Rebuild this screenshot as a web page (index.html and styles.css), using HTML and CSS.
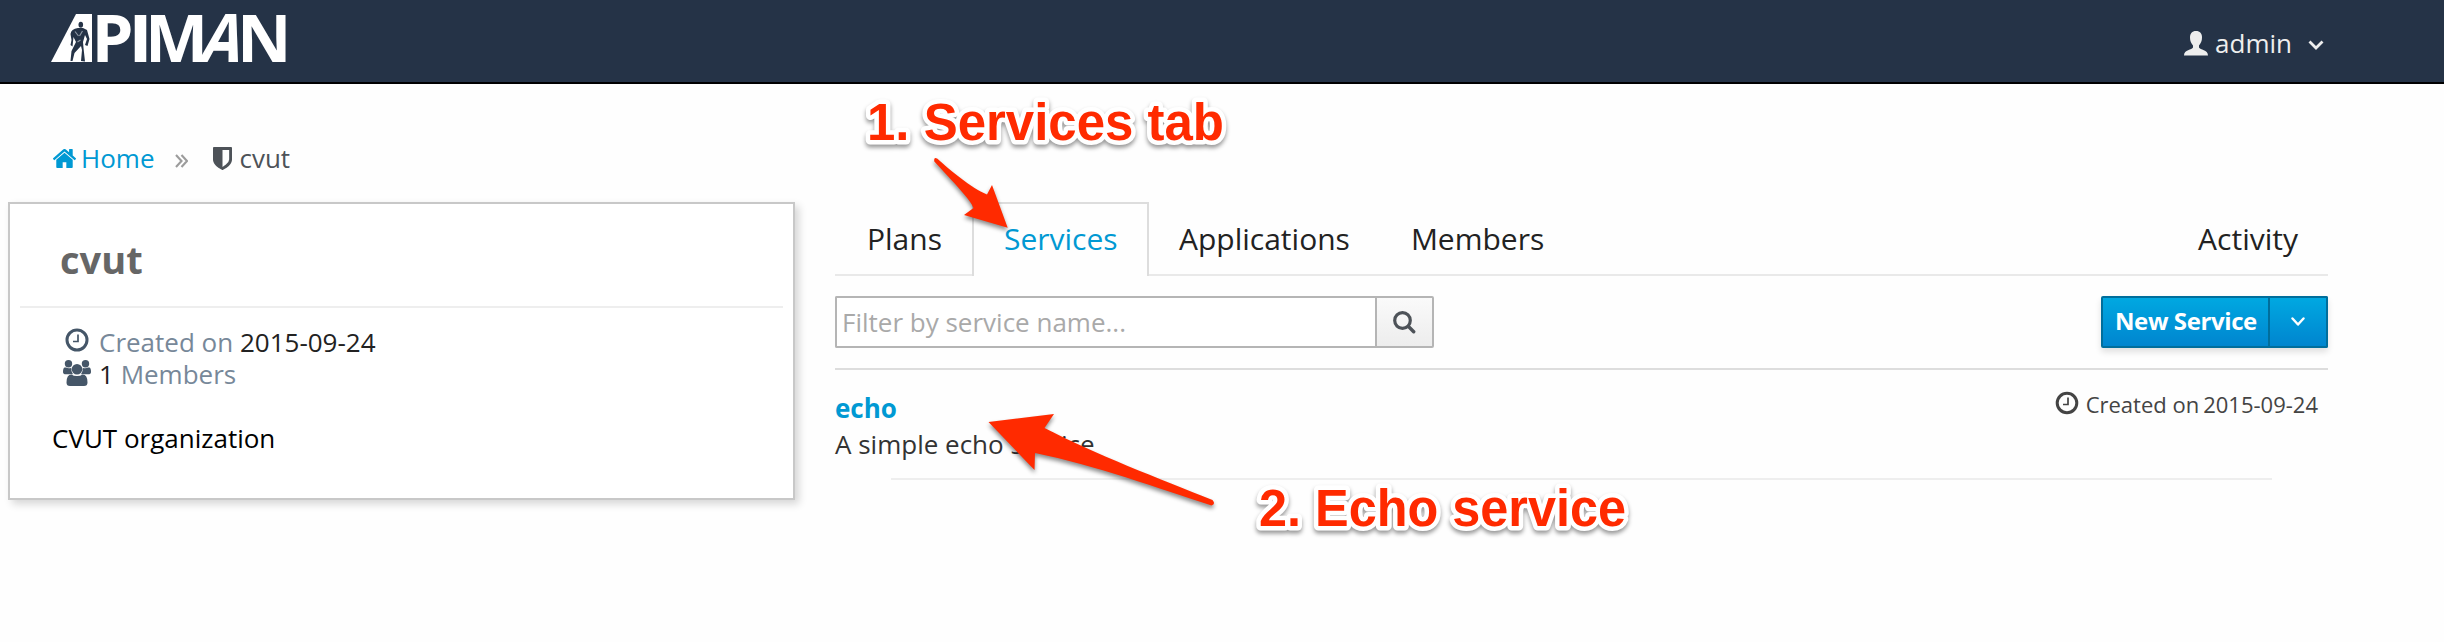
FILE: index.html
```html
<!DOCTYPE html>
<html lang="en">
<head>
<meta charset="utf-8">
<title>apiman - cvut</title>
<link rel="stylesheet" href="styles.css">
</head>
<body>
<header class="navbar">
  <svg class="logo" width="240" height="82" viewBox="0 0 240 82" role="img" aria-label="APIMAN">
    <path class="logo-mark" d="M0 62 25 14H41V62Z"/>
    <g class="logo-man">
      <ellipse cx="29.8" cy="24.8" rx="2.3" ry="3"/>
      <path d="M27 28Q20 29 19.5 34L20.5 40 19.5 45 21.500 46.500 22.500 37 25 42 20.5 51 19.5 61H21.500L23.500 53 30 46 31 50 30 61 34 61.500 32.500 48 32 42 34 35 36 39 34 45 36.500 46 38.500 39 36 30 32 28Z"/>
      <path class="logo-man-light" d="M24 31.500 27.500 36M31.500 31 28.500 36M26.500 42 29.500 40"/>
    </g>
    <g class="logo-word">
      <text x="40.500" y="62">P</text>
      <text x="77" y="62" textLength="25" lengthAdjust="spacingAndGlyphs">I</text>
      <text x="94" y="62">M</text>
      <text transform="translate(147 62) skewX(-15)" textLength="40" lengthAdjust="spacingAndGlyphs">A</text>
      <text x="186" y="62">N</text>
    </g>
  </svg>
  <div class="user-menu">
    <svg width="24" height="25" viewBox="0 0 24 25"><path fill="currentColor" d="M12 0C16 0 18 2.500 18 6.500 18 10 16.800 12 15 14.500V16.500C16 19 24 18.500 24 24.500H0C0 18.500 8 19 9 16.500V14.500C7.200 12 6 10 6 6.500 6 2.500 8 0 12 0Z"/></svg>
    <span class="user-name">admin</span>
    <svg width="16" height="11" viewBox="0 0 16 11"><path class="stroke" stroke-width="2.800" d="M1.500 1.500 8 8 14.500 1.500"/></svg>
  </div>
</header>

<nav class="breadcrumb">
  <a class="crumb-home" href="#"><svg width="23" height="19" viewBox="26 256 1612 1280" preserveAspectRatio="none"><path fill="currentColor" d="M1408 992v480q0 26-19 45t-45 19h-384v-384h-256v384h-384q-26 0-45-19t-19-45v-480q0-1 .5-3t.5-3l575-474 575 474q1 2 1 6zm223-69l-62 74q-8 9-21 11h-3q-13 0-21-7l-692-577-692 577q-12 8-24 7-13-2-21-11l-62-74q-8-10-7-23.500t11-21.500l719-599q32-26 76-26t76 26l244 204v-195q0-14 9-23t23-9h192q14 0 23 9t9 23v408l219 182q10 8 11 21.500t-7 23.500z"/></svg><span>Home</span></a>
  <svg class="crumb-sep" width="13" height="14" viewBox="0 0 13 14"><path class="stroke" stroke-width="2.100" d="M1 1 6.500 7 1 13M6.500 1 12 7 6.500 13"/></svg>
  <span class="crumb-org"><svg width="19" height="23" viewBox="256 128 1280 1536" preserveAspectRatio="none"><path fill="currentColor" d="M1344 960v-640h-448v1137q119-63 213-137 235-184 235-360zm192-768v768q0 86-33.500 170.500t-83 150-118 127.500-126.500 103-121 77.500-89.500 49.500-42.500 20q-12 6-26 6t-26-6q-16-7-42.500-20t-89.500-49.500-121-77.500-126.500-103-118-127.500-83-150-33.500-170.500v-768q0-26 19-45t45-19h1152q26 0 45 19t19 45z"/></svg><span>cvut</span></span>
</nav>

<main class="page">
  <section class="org-card">
    <h1 class="org-title">cvut</h1>
    <div class="org-meta">
      <div class="meta-row">
        <svg class="meta-icon" width="28" height="28" viewBox="0 0 28 28"><circle class="stroke" stroke-width="3" cx="14" cy="14" r="10"/><path class="stroke" stroke-width="1.700" d="M15 8.500V15.500H10"/></svg>
        <span><span class="muted">Created on</span> 2015-09-24</span>
      </div>
      <div class="meta-row">
        <svg class="meta-icon members" width="28" height="26" viewBox="0 0 28 26"><g fill="currentColor"><circle cx="5.500" cy="3.700" r="3.700"/><circle cx="22.500" cy="3.700" r="3.700"/><path d="M3 7.500Q5.500 9 8.300 7.800 7.800 11 10 14.300H3Q0 14.300 0 12 0 8 1.500 7.500ZM25 7.500Q22.500 9 19.700 7.800 20.200 11 18 14.300H25Q28 14.300 28 12 28 8 26.500 7.500Z"/><circle cx="14" cy="9.300" r="5.300"/><path d="M8.500 14.500Q10.500 16 14 16T19.500 14.500Q24.500 14.500 24.500 22.500 24.500 26 21 26H7Q3.500 26 3.500 22.500 3.500 14.500 8.500 14.500Z"/></g></svg>
        <span>1 <span class="muted">Members</span></span>
      </div>
    </div>
    <p class="org-desc">CVUT organization</p>
  </section>

  <section class="content">
    <ul class="tabs">
      <li class="tab">Plans</li>
      <li class="tab active">Services</li>
      <li class="tab">Applications</li>
      <li class="tab">Members</li>
      <li class="tab last">Activity</li>
    </ul>
    <div class="toolbar">
      <div class="filter">
        <input class="filter-input" type="text" placeholder="Filter by service name...">
        <button class="filter-btn" aria-label="Search"><svg width="23" height="23" viewBox="0 0 23 23"><circle class="stroke" stroke-width="3.200" cx="9.500" cy="9.500" r="7.800"/><path class="stroke" stroke-width="3.400" stroke-linecap="round" d="M15.500 15.500 20.700 20.700"/></svg></button>
      </div>
      <div class="split-btn">
        <button class="btn-main"><span>New Service</span></button>
        <button class="btn-toggle" aria-label="More"><svg width="14" height="10" viewBox="0 0 14 10"><path class="stroke" stroke-width="2.400" stroke-linecap="round" stroke-linejoin="round" d="M1.500 1.500 7 7.500 12.500 1.500"/></svg></button>
      </div>
    </div>
    <article class="service">
      <div>
        <a class="service-name" href="#">echo</a>
        <p class="service-desc">A simple echo service</p>
      </div>
      <div class="service-date">
        <svg width="24" height="24" viewBox="0 0 24 24"><circle class="stroke" stroke-width="3" cx="12" cy="12" r="9.800"/><path class="stroke" stroke-width="1.700" d="M13 6.500V13.500H8"/></svg>
        <span class="date-label">Created on</span><span>2015-09-24</span>
      </div>
    </article>
  </section>
</main>

<svg class="annotations" width="2444" height="642" viewBox="0 0 2444 642">
  <g class="arrows">
    <path d="M937.500 158.800C950 170 971 188 987 194.500L992 185 1007.700 227.700 964 215 973.500 208C971 200 953 182 934.300 161.500Q933.500 156.500 937.500 158.800Z"/>
    <path d="M988.500 422 1054 414 1044.500 428C1095 454 1160 479 1212.500 500Q1216 504 1211.500 505.500C1160 489 1095 465 1035 453L1034.500 470Z"/>
  </g>
  <g class="notes">
    <text x="867" y="140" textLength="357" lengthAdjust="spacingAndGlyphs">1. Services tab</text>
    <text x="1259" y="526" textLength="367" lengthAdjust="spacingAndGlyphs">2. Echo service</text>
  </g>
</svg>
</body>
</html>
```
FILE: styles.css
```css
* { box-sizing: border-box; }

body {
  margin: 0;
  width: 2444px;
  height: 642px;
  overflow: hidden;
  background: #fefefe;
  color: #333;
  font: 26px/32px "Open Sans", "Noto Sans", sans-serif;
}

a { color: #0099d3; text-decoration: none; }
svg { display: block; flex: none; }
button, input { font: inherit; margin: 0; }
.stroke { fill: none; stroke: currentColor; }

.navbar {
  display: flex;
  justify-content: space-between;
  height: 84px;
  padding: 0 120px 0 51px;
  background: #253347;
  border-bottom: 2px solid #000;
}
.logo { overflow: visible; }
.logo-mark { fill: #fff; }
.logo-man { fill: #253347; }
.logo-man-light { fill: none; stroke: #8f98a4; stroke-width: 1.2; }
.logo-word { fill: #fff; font-size: 67px; font-weight: 700; }
.user-menu {
  display: flex;
  align-items: flex-start;
  padding-top: 31px;
  color: #eee;
}
.user-name { margin: -4px 16px 0 7px; }
.user-menu svg:last-child { margin-top: 9px; }

.breadcrumb {
  display: flex;
  height: 118px;
  padding: 58px 0 0 53px;
  color: #4d5258;
}
.crumb-home, .crumb-org { display: flex; gap: 7px; }
.crumb-home svg { margin-top: 7px; }
.crumb-home { gap: 5px; }
.crumb-sep { margin: 12px 25px 0 21px; color: #9c9c9c; }
.crumb-org svg { margin-top: 5px; }

.page { display: flex; gap: 40px; padding-left: 8px; }

.org-card {
  width: 787px;
  height: 298px;
  padding: 0 10px;
  background: #fff;
  border: 2px solid #c8c8c8;
  box-shadow: 4px 4px 8px rgba(0, 0, 0, .16);
}
.org-title {
  height: 104px;
  margin: 0;
  padding: 31px 0 0 40px;
  border-bottom: 2px solid #eee;
  color: #666;
  font-size: 38px;
  line-height: 48px;
}
.org-meta { padding: 18px 0 0 43px; color: #222; }
.meta-row { display: flex; gap: 8px; height: 32px; }
.meta-icon { color: #455668; }
.meta-icon.members { margin-top: 2px; }
.muted { color: #778899; }
.org-desc { margin: 32px 0 0 32px; color: #000; }

.content { width: 1493px; }
.tabs {
  display: flex;
  height: 74px;
  margin: 0;
  padding: 0;
  list-style: none;
  box-shadow: inset 0 -2px #e9e9e9;
  color: #222;
  font-size: 30px;
  line-height: 36px;
}
.tab { padding: 19px 30px 0; }
.tab:first-child { width: 137px; padding-left: 32px; }
.tab.active {
  width: 177px;
  padding: 17px 0 0 30px;
  background: #fefefe;
  border: 2px solid #ddd;
  border-bottom: 0;
  color: #0099d3;
}
.tab:nth-child(4) { padding-left: 31px; }
.tab.last { margin-left: auto; }

.toolbar {
  display: flex;
  justify-content: space-between;
  height: 94px;
  padding-top: 20px;
  border-bottom: 2px solid #ddd;
}
.filter, .split-btn { display: flex; height: 52px; }
.filter-input {
  width: 540px;
  padding: 0 5px;
  background: #fff;
  border: 2px solid #b5b5b5;
  border-right: 0;
  border-radius: 2px 0 0 2px;
}
.filter-input::placeholder { color: #a9a9a9; opacity: 1; }
.filter-btn {
  width: 59px;
  padding: 0 0 0 16px;
  background: linear-gradient(#fafafa, #ededed);
  border: 2px solid #b5b5b5;
  border-radius: 0 2px 2px 0;
  color: #4d5258;
}
.split-btn {
  border-radius: 2px;
  box-shadow: 0 4px 6px rgba(0, 0, 0, .12);
}
.btn-main, .btn-toggle {
  padding: 0;
  background: linear-gradient(#00a8e1, #0085cf);
  border: 2px solid #006e9c;
  color: #fff;
}
.btn-main {
  width: 169px;
  padding: 0 0 2px 12px;
  border-radius: 2px 0 0 2px;
  font-size: 24px;
  font-weight: 700;
  letter-spacing: -.4px;
  text-align: left;
  white-space: nowrap;
}
.btn-toggle {
  display: grid;
  place-items: center;
  width: 58px;
  border-left: 0;
  border-radius: 0 2px 2px 0;
}

.service {
  display: flex;
  justify-content: space-between;
  position: relative;
  height: 110px;
  padding-top: 22px;
}
.service::after {
  content: "";
  position: absolute;
  right: 56px;
  bottom: 0;
  left: 56px;
  height: 2px;
  background: #eee;
}
.service-name { display: block; font-weight: 700; }
.service-desc { margin: 4px 0 0; }
.service-date {
  display: flex;
  padding-right: 10px;
  color: #444;
  font-size: 22px;
  line-height: 24px;
}
.service-date svg { margin: -1px 7px 0 0; }
.date-label { margin-right: 4px; }

.annotations { position: absolute; inset: 0; pointer-events: none; }
.arrows { fill: #ff2a00; filter: drop-shadow(0 3px 2px rgba(0, 0, 0, .45)); }
.notes {
  fill: #ff2a00;
  stroke: #fff;
  stroke-width: 9px;
  stroke-linejoin: round;
  paint-order: stroke;
  font: 700 51px "Liberation Sans", Arial, sans-serif;
  filter: drop-shadow(0 3px 2px rgba(0, 0, 0, .4));
}
```
